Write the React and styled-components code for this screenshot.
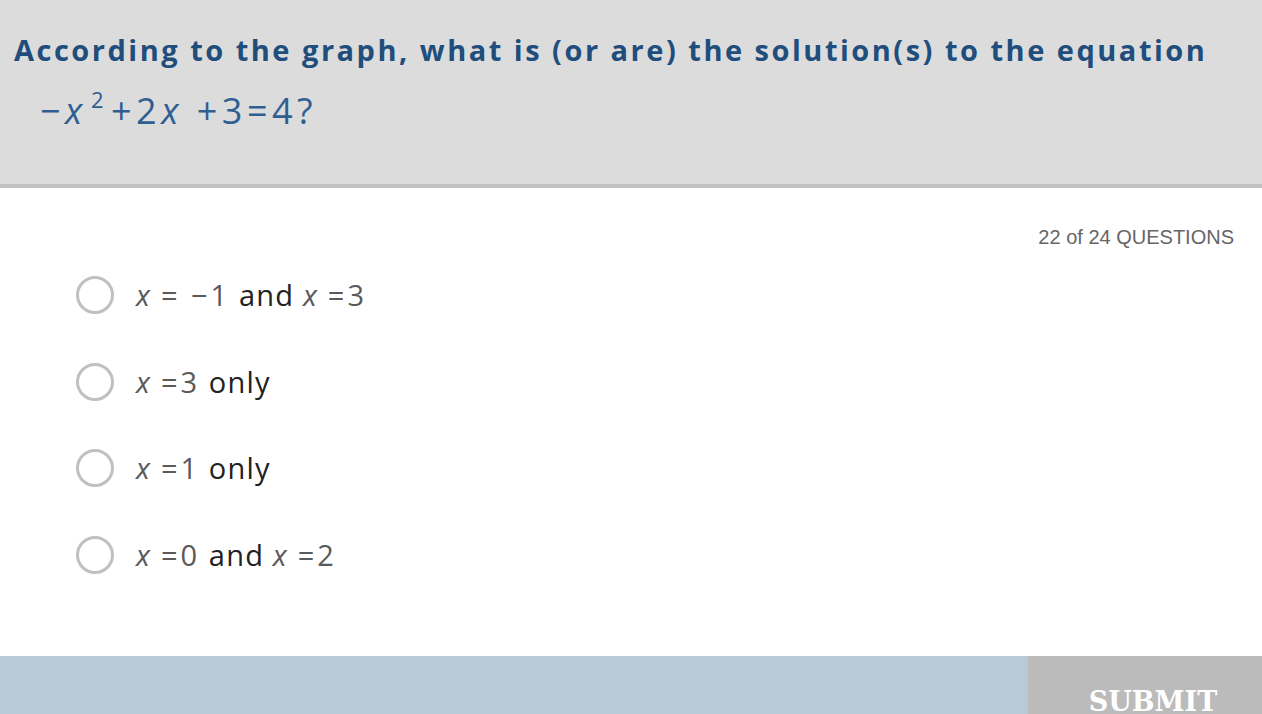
import React, { useState } from 'react';
import styled, { createGlobalStyle } from 'styled-components';

const GlobalStyle = createGlobalStyle`
  html, body {
    margin: 0;
    padding: 0;
    background: #ffffff;
    overflow: hidden;
  }
`;

const Page = styled.div`
  display: flex;
  flex-direction: column;
  height: 714px;
  width: 1262px;
  overflow: hidden;
`;

const Header = styled.header`
  background: #dcdcdc;
  border-bottom: 4px solid #c2c2c2;
  height: 184px;
  box-sizing: content-box;
  padding: 0 0 0 14px;
`;

const Title = styled.h1`
  margin: 0;
  padding-top: 30px;
  font-family: "Open Sans", Lato, sans-serif;
  font-weight: 700;
  font-size: 29px;
  line-height: 40px;
  letter-spacing: 2.5px;
  color: #1f4e7c;
  white-space: nowrap;
`;

const Equation = styled.div`
  margin: 18px 0 0 26px;
  font-family: "Open Sans", "DejaVu Sans", sans-serif;
  font-size: 36px;
  line-height: 46px;
  color: #2f5f90;
  letter-spacing: 4.5px;

  i {
    font-style: italic;
  }

  sup {
    font-size: 22px;
    vertical-align: 16px;
    line-height: 0;
    margin: 0 3px 0 4px;
  }
`;

const Body = styled.main`
  flex: 1;
  padding: 0 0 0 76px;
`;

const Counter = styled.div`
  text-align: right;
  padding: 37px 28px 0 0;
  font-family: "Liberation Sans", Arial, sans-serif;
  font-size: 20px;
  line-height: 24px;
  color: #666666;
`;

const Options = styled.div`
  display: flex;
  flex-direction: column;
  gap: 48.5px;
  margin-top: 27px;
`;

const Option = styled.label`
  display: flex;
  align-items: center;
  gap: 22px;
  height: 38px;
  cursor: pointer;
`;

const Radio = styled.span`
  width: 32px;
  height: 32px;
  border-radius: 50%;
  border: 3px solid ${({ checked }) => (checked ? '#2f5f90' : '#c0c0c0')};
  flex-shrink: 0;
  position: relative;

  &::after {
    content: '';
    position: absolute;
    inset: 6px;
    border-radius: 50%;
    background: ${({ checked }) => (checked ? '#2f5f90' : 'transparent')};
  }
`;

const OptionText = styled.span`
  font-family: "Open Sans", Roboto, sans-serif;
  font-size: 29px;
  line-height: 38px;
  color: #222222;
  letter-spacing: 1.2px;
  white-space: pre;
`;

const Math = styled.span`
  color: #5a5a5a;
  letter-spacing: 3px;

  i {
    font-style: italic;
    margin-right: 8px;
  }
`;

const Footer = styled.footer`
  display: flex;
  height: 58px;
  flex-shrink: 0;
  background: #b9c9d5;
`;

const Spacer = styled.div`
  flex: 1;
`;

const SubmitButton = styled.button`
  width: 234px;
  border: none;
  background: #bbbbbb;
  color: #ffffff;
  font-family: "DejaVu Serif", "Liberation Serif", serif;
  font-weight: 700;
  font-size: 27px;
  padding: 29px 0 0 16px;
  line-height: 34px;
  display: flex;
  justify-content: center;
  align-items: flex-start;
`;

const answers = [
  { id: 'a', math1: ['x', '= −1'], word: 'and', math2: ['x', '=3'] },
  { id: 'b', math1: ['x', '=3'], word: 'only' },
  { id: 'c', math1: ['x', '=1'], word: 'only' },
  { id: 'd', math1: ['x', '=0'], word: 'and', math2: ['x', '=2'] },
];

function App() {
  const [selected, setSelected] = useState(null);

  return (
    <Page>
      <GlobalStyle />
      <Header>
        <Title>According to the graph, what is (or are) the solution(s) to the equation</Title>
        <Equation>
          −<i>x</i><sup>2</sup>+2<i>x</i> +3=4?
        </Equation>
      </Header>

      <Body>
        <Counter>22 of 24 QUESTIONS</Counter>
        <Options>
          {answers.map(a => (
            <Option key={a.id} onClick={() => setSelected(a.id)}>
              <Radio checked={selected === a.id} />
              <OptionText>
                <Math><i>{a.math1[0]}</i>{a.math1[1]}</Math> {a.word}
                {a.math2 && (
                  <> <Math><i>{a.math2[0]}</i>{a.math2[1]}</Math></>
                )}
              </OptionText>
            </Option>
          ))}
        </Options>
      </Body>

      <Footer>
        <Spacer />
        <SubmitButton>SUBMIT</SubmitButton>
      </Footer>
    </Page>
  );
}

export default App;
